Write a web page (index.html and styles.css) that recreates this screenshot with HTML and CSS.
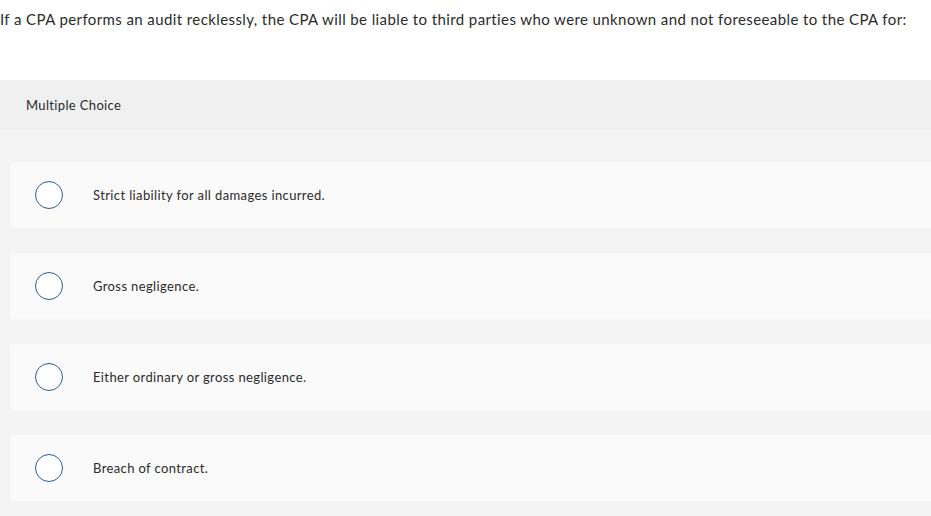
FILE: index.html
```html
<!DOCTYPE html>
<html>
<head>
<meta charset="utf-8">
<link rel="stylesheet" href="styles.css">
</head>
<body>
<div class="question">If a CPA performs an audit recklessly, the CPA will be liable to third parties who were unknown and not foreseeable to the CPA for:</div>
<div class="type-bar">Multiple Choice</div>
<div class="options">
  <div class="option"><span class="radio"></span><span class="label">Strict liability for all damages incurred.</span></div>
  <div class="option"><span class="radio"></span><span class="label">Gross negligence.</span></div>
  <div class="option"><span class="radio"></span><span class="label">Either ordinary or gross negligence.</span></div>
  <div class="option"><span class="radio"></span><span class="label">Breach of contract.</span></div>
</div>
</body>
</html>
```
FILE: styles.css
```css
html, body {
  margin: 0;
  padding: 0;
  background: #f4f4f4;
  font-family: "Lato", "Liberation Sans", sans-serif;
  color: #2b2b2b;
  overflow: hidden;
}
.question {
  background: #fff;
  font-size: 15px;
  line-height: 20px;
  letter-spacing: 0.4px;
  padding: 9px 0 51px 0;
  white-space: nowrap;
}
.type-bar {
  background: #f0f0f0;
  height: 50px;
  box-sizing: border-box;
  padding-left: 26px;
  display: flex;
  align-items: center;
  font-size: 13px;
  letter-spacing: 0.35px;
}
.options {
  padding: 32px 0 15px 10px;
  display: flex;
  flex-direction: column;
  gap: 25px;
}
.option {
  background: #fafafa;
  height: 66px;
  border-radius: 3px 0 0 3px;
  display: flex;
  align-items: center;
  padding-left: 25px;
}
.radio {
  width: 28px;
  height: 28px;
  box-sizing: border-box;
  border: 1.5px solid #2e5f8e;
  border-radius: 50%;
  background: #fff;
  flex: none;
}
.label {
  margin-left: 30px;
  font-size: 13px;
  letter-spacing: 0.38px;
}
```
